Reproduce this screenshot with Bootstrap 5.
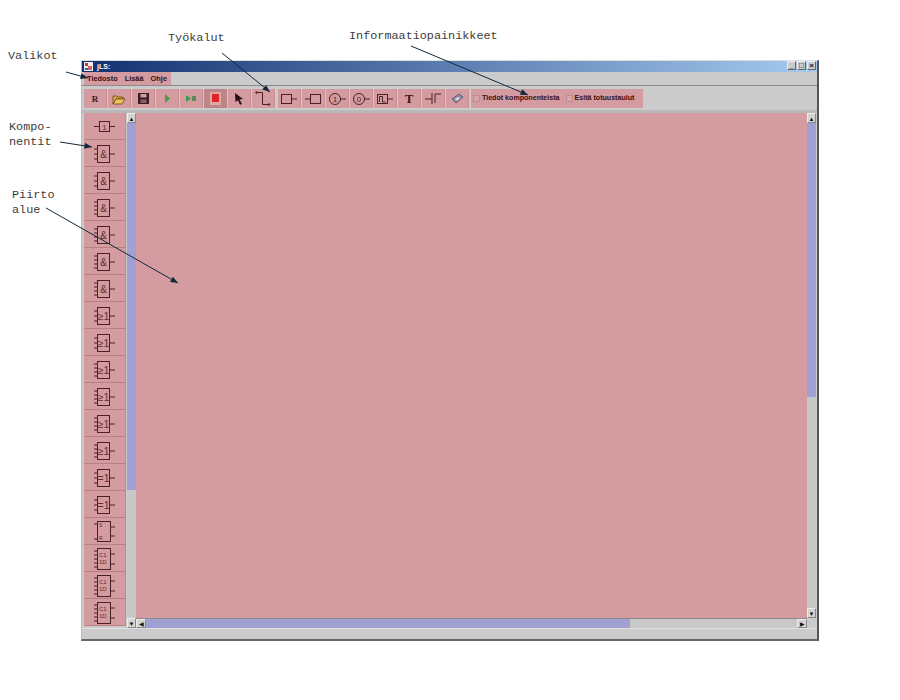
<!DOCTYPE html>
<html lang="fi">
<head>
<meta charset="UTF-8">
<title>JLS</title>
<link href="https://cdn.jsdelivr.net/npm/bootstrap@5.3.0/dist/css/bootstrap.min.css" rel="stylesheet">
<style>
  body { background: #fff; width: 900px; height: 700px; overflow: hidden; position: relative; font-family: "Liberation Sans", Arial, sans-serif; }
  /* window */
  .jls-window { width: 738px; height: 581px; margin: 60px 0 0 81px; background: #cbcbcb; border-right: 2px solid #555; border-bottom: 2px solid #666; border-left: 1px solid #bbb; border-top: 1px solid #ddd; }
  .jls-title { height: 11px; background: linear-gradient(90deg, #12306f, #a6caf0); color: #fff; font-size: 7px; font-weight: 700; line-height: 11px; padding-left: 2px; }
  .jls-winbtn { width: 9px; height: 9px; background: #ccc; border: 1px solid #666; border-top-color: #eee; border-left-color: #eee; margin-left: 1px; font-size: 8px; line-height: 7px; color: #111; text-align: center; }
  .jls-menubar { height: 14px; border-bottom: 1px solid #8a8a8a; padding-left: 2px; }
  .jls-menu { background: #d49ca0; color: #3a0f14; font-size: 7.4px; font-weight: 700; line-height: 14px; padding: 0 4px 0 3px; gap: 7px; }
  .jls-toolbar { height: 27px; padding: 3px 2px 0; border-bottom: 3px solid #b9b9b9; gap: 1px; }
  .jls-tool.btn { width: 23px; height: 19px; background: #d49ca0; color: #40151a; border: 0; border-right: 1px solid #c98f93; display: flex; align-items: center; justify-content: center; padding: 0; border-radius: 0; }
  .jls-tool.btn.active { background: #bd8588; border-color: #bd8588; }
  .jls-tool-gap { margin-left: 2px; }
  .jls-info { height: 19px; margin-left: 1px; background: #d49ca0; color: #3a0f14; font-size: 7.1px; font-weight: 700; width: 172px; padding-left: 2px; gap: 6px; white-space: nowrap; }
  .jls-check { width: 7px; height: 7px; background: #d8a5a8; border: 1px solid #bd8c90; margin-right: 2px; flex: none; }
  .jls-main { height: 517px; padding-left: 2px; }
  .jls-side { width: 42px; }
  .jls-part.btn { width: 42px; height: 27px; background: #d49ca0; border: 0; border-bottom: 1px solid #b98084; border-right: 1px solid #c18a8e; padding: 0; display: block; border-radius: 0; }
  .jls-part svg { display: block; }
  .jls-part text { font-family: "Liberation Sans", Arial, sans-serif; fill: #5a3035; }
  .jls-vbar { width: 9px; background: #c8c8c8; }
  .jls-arrow { height: 10px; background: #d4d4d4; color: #111; font-size: 6px; line-height: 10px; text-align: center; flex: none; border: 1px solid #eee; border-right-color: #888; border-bottom-color: #888; }
  .jls-thumb { background: #a0a0d2; }
  .jls-canvas { background: #d49ca0; }
  .jls-hbar { height: 10px; background: #c8c8c8; border-top: 1px solid #8b8b8b; }
  .jls-hbar .jls-arrow { width: 10px; height: 9px; line-height: 8px; }
  .jls-status { height: 11px; border-top: 1px solid #e2e2e2; }
  /* annotations */
  .jls-note { position: absolute; font-family: "Liberation Mono", "Courier New", monospace; font-size: 11.8px; line-height: 15px; color: #3c3c3c; }
  .jls-arrows { position: absolute; left: 0; top: 0; pointer-events: none; }
</style>
</head>
<body>
<svg width="0" height="0" class="position-absolute">
  <defs>
    <g id="g-and" fill="none" stroke="#4a2226" stroke-width="1">
      <rect x="13.500" y="5.500" width="12" height="17"/>
      <path d="M25 14h6M13 9h-3M13 14h-3M13 19h-3"/>
    </g>
    <g id="g-and2" fill="none" stroke="#4a2226" stroke-width="1">
      <rect x="13.500" y="5.500" width="12" height="17"/>
      <path d="M25 14h6M13 8h-3M13 12h-3M13 16h-3M13 20h-3"/>
    </g>
    <g id="g-latch" fill="none" stroke="#4a2226" stroke-width="1">
      <rect x="13.500" y="3.500" width="13" height="21"/>
      <path d="M26 9h5M26 19h5M14 6h-4M14 10h-4M14 14h-4M14 18h-4M14 22h-4"/>
    </g>
  </defs>
</svg>

<div class="jls-window d-flex flex-column">
  <div class="jls-title d-flex justify-content-between">
    <span class="d-flex align-items-center gap-1">
      <svg width="9" height="9" viewBox="0 0 9 9"><rect width="9" height="9" fill="#eee"/><path d="M1 1h3v3H1z" fill="#c33"/><path d="M4 4h4v4H4z" fill="#c66"/><path d="M1 6h3v2H1z" fill="#36a"/></svg>
      jLS:
    </span>
    <span class="d-flex" style="padding-right:1px">
      <span class="jls-winbtn">_</span><span class="jls-winbtn">□</span><span class="jls-winbtn">×</span>
    </span>
  </div>

  <div class="jls-menubar d-flex">
    <div class="jls-menu d-flex"><span>Tiedosto</span><span>Lisää</span><span>Ohje</span></div>
  </div>

  <div class="jls-toolbar d-flex">
    <button class="jls-tool btn"><span style="font:700 9px 'Liberation Serif',serif">R</span></button>
    <button class="jls-tool btn"><svg width="14" height="12" viewBox="0 0 14 12"><path d="M1 3h4l1 1h5v2H4L1 11z" fill="#e2a63a" stroke="#5a3a10" stroke-width=".7"/><path d="M4 6h9l-3 5H1z" fill="#efc35c" stroke="#5a3a10" stroke-width=".7"/></svg></button>
    <button class="jls-tool btn"><svg width="11" height="11" viewBox="0 0 11 11"><rect width="11" height="11" fill="#3f1c22"/><rect x="2.500" y="1" width="6" height="3.500" fill="#c9a0a0"/><rect x="2.500" y="6.500" width="6" height="3.500" fill="#8c5f62"/></svg></button>
    <button class="jls-tool btn"><svg width="7" height="9" viewBox="0 0 7 9"><path d="M1 0l5 4.500L1 9z" fill="#4c9a4a"/></svg></button>
    <button class="jls-tool btn"><svg width="11" height="7" viewBox="0 0 11 7"><path d="M0 0l5 3.500L0 7z" fill="#3f9a55"/><rect x="6" y="1" width="4" height="5" fill="#5d8a5b"/></svg></button>
    <button class="jls-tool btn active"><svg width="11" height="13" viewBox="0 0 11 13"><rect width="11" height="13" fill="#e0a8a0"/><rect x="2" y="2" width="7" height="8" fill="#e0242c"/></svg></button>
    <button class="jls-tool btn"><svg width="10" height="13" viewBox="0 0 10 13"><path d="M1 1l8 6-3.500.5L8 12l-2 .8-2-4.600L1.500 10z" fill="#2a0c14"/></svg></button>
    <button class="jls-tool btn"><svg width="16" height="17" viewBox="0 0 16 17" fill="none" stroke="#4a2226"><path d="M1 2.500h6.500v12H14"/><circle cx="1.500" cy="2.500" r=".8" fill="#4a2226"/><circle cx="14" cy="14.500" r=".8" fill="#4a2226"/></svg></button>
    <button class="jls-tool btn jls-tool-gap"><svg width="16" height="12" viewBox="0 0 16 12" fill="none" stroke="#4a2226"><rect x=".5" y="1.500" width="10" height="9"/><path d="M10.500 6H16"/></svg></button>
    <button class="jls-tool btn"><svg width="16" height="12" viewBox="0 0 16 12" fill="none" stroke="#4a2226"><rect x="5.500" y="1.500" width="10" height="9"/><path d="M0 6h5.500"/></svg></button>
    <button class="jls-tool btn"><svg width="17" height="12" viewBox="0 0 17 12" fill="none" stroke="#4a2226"><circle cx="6" cy="6" r="5.500"/><path d="M11.500 6H17"/><text x="6" y="9" font-size="8" text-anchor="middle" fill="#4a2226" stroke="none" font-family="Liberation Sans">1</text></svg></button>
    <button class="jls-tool btn"><svg width="17" height="12" viewBox="0 0 17 12" fill="none" stroke="#4a2226"><circle cx="6" cy="6" r="5.500"/><path d="M11.500 6H17"/><text x="6" y="9" font-size="8" text-anchor="middle" fill="#4a2226" stroke="none" font-family="Liberation Sans">0</text></svg></button>
    <button class="jls-tool btn"><svg width="17" height="12" viewBox="0 0 17 12" fill="none" stroke="#4a2226"><rect x=".5" y="1.500" width="10" height="9"/><path d="M10.500 6H16M2.500 9V3.500h3V9h3"/></svg></button>
    <button class="jls-tool btn"><span style="font:700 13px 'Liberation Serif',serif">T</span></button>
    <button class="jls-tool btn"><svg width="17" height="13" viewBox="0 0 17 13" fill="none" stroke="#4a2226"><path d="M0 7h7M7 1v11M10 2v9M10 2h6"/></svg></button>
    <button class="jls-tool btn"><svg width="13" height="11" viewBox="0 0 13 11"><path d="M1 6l7-5 4 3-7 6z" fill="#8d8fb0" stroke="#4b3a50" stroke-width=".7"/><path d="M4 6l3-2 2 1.500-3 2z" fill="#e8d8d8"/></svg></button>
    <div class="jls-info d-flex align-items-center">
      <span class="d-flex align-items-center"><span class="jls-check"></span>Tiedot komponenteista</span>
      <span class="d-flex align-items-center"><span class="jls-check"></span>Esitä totuustaulut</span>
    </div>
  </div>

  <div class="jls-main d-flex">
    <div class="jls-side d-flex flex-column">
      <button class="jls-part btn"><svg width="41" height="26"><g fill="none" stroke="#4a2226"><rect x="15.500" y="8.500" width="10" height="10"/><path d="M10 13.500h5M26 13.500h5"/></g><text x="20.500" y="16.500" font-size="8" text-anchor="middle">1</text></svg></button>
      <button class="jls-part btn"><svg width="41" height="26"><use href="#g-and"/><text x="19.500" y="17.500" font-size="10" text-anchor="middle">&amp;</text></svg></button>
      <button class="jls-part btn"><svg width="41" height="26"><use href="#g-and"/><text x="19.500" y="17.500" font-size="10" text-anchor="middle">&amp;</text></svg></button>
      <button class="jls-part btn"><svg width="41" height="26"><use href="#g-and2"/><text x="19.500" y="17.500" font-size="10" text-anchor="middle">&amp;</text></svg></button>
      <button class="jls-part btn"><svg width="41" height="26"><use href="#g-and2"/><text x="19.500" y="17.500" font-size="10" text-anchor="middle">&amp;</text></svg></button>
      <button class="jls-part btn"><svg width="41" height="26"><use href="#g-and2"/><text x="19.500" y="17.500" font-size="10" text-anchor="middle">&amp;</text></svg></button>
      <button class="jls-part btn"><svg width="41" height="26"><use href="#g-and2"/><text x="19.500" y="17.500" font-size="10" text-anchor="middle">&amp;</text></svg></button>
      <button class="jls-part btn"><svg width="41" height="26"><use href="#g-and"/><text x="19.500" y="18" font-size="10.500" text-anchor="middle">≥1</text></svg></button>
      <button class="jls-part btn"><svg width="41" height="26"><use href="#g-and"/><text x="19.500" y="18" font-size="10.500" text-anchor="middle">≥1</text></svg></button>
      <button class="jls-part btn"><svg width="41" height="26"><use href="#g-and2"/><text x="19.500" y="18" font-size="10.500" text-anchor="middle">≥1</text></svg></button>
      <button class="jls-part btn"><svg width="41" height="26"><use href="#g-and2"/><text x="19.500" y="18" font-size="10.500" text-anchor="middle">≥1</text></svg></button>
      <button class="jls-part btn"><svg width="41" height="26"><use href="#g-and2"/><text x="19.500" y="18" font-size="10.500" text-anchor="middle">≥1</text></svg></button>
      <button class="jls-part btn"><svg width="41" height="26"><use href="#g-and2"/><text x="19.500" y="18" font-size="10.500" text-anchor="middle">≥1</text></svg></button>
      <button class="jls-part btn"><svg width="41" height="26"><use href="#g-and"/><text x="19.500" y="18" font-size="10.500" text-anchor="middle">=1</text></svg></button>
      <button class="jls-part btn"><svg width="41" height="26"><use href="#g-and"/><text x="19.500" y="18" font-size="10.500" text-anchor="middle">=1</text></svg></button>
      <button class="jls-part btn"><svg width="41" height="26"><g fill="none" stroke="#4a2226"><rect x="13.500" y="3.500" width="13" height="20"/><path d="M14 6h-4M14 21h-4M26 9h5M26 18h5"/></g><text x="15" y="9" font-size="5">S</text><text x="15" y="22" font-size="5">R</text></svg></button>
      <button class="jls-part btn"><svg width="41" height="26"><use href="#g-latch"/><text x="15" y="12" font-size="6">C1</text><text x="15" y="19" font-size="6">1D</text></svg></button>
      <button class="jls-part btn"><svg width="41" height="26"><use href="#g-latch"/><text x="15" y="12" font-size="6">C1</text><text x="15" y="19" font-size="6">1D</text></svg></button>
      <button class="jls-part btn"><svg width="41" height="26"><use href="#g-latch"/><text x="15" y="12" font-size="6">C1</text><text x="15" y="19" font-size="6">1D</text></svg></button>
    </div>
    <div class="jls-vbar d-flex flex-column" style="margin-left:1px">
      <div class="jls-arrow">▲</div>
      <div class="jls-thumb" style="height:367px"></div>
      <div class="flex-grow-1"></div>
      <div class="jls-arrow">▼</div>
    </div>
    <div class="d-flex flex-column flex-grow-1">
      <div class="jls-canvas flex-grow-1"></div>
      <div class="jls-hbar d-flex">
        <div class="jls-arrow">◀</div>
        <div class="jls-thumb" style="width:484px"></div>
        <div class="flex-grow-1"></div>
        <div class="jls-arrow">▶</div>
      </div>
    </div>
    <div class="d-flex flex-column" style="width:9px;margin-right:1px">
      <div class="jls-vbar d-flex flex-column flex-grow-1 w-100">
        <div class="jls-arrow">▲</div>
        <div class="jls-thumb" style="height:274px"></div>
        <div class="flex-grow-1"></div>
        <div class="jls-arrow">▼</div>
      </div>
      <div style="height:10px"></div>
    </div>
  </div>
  <div class="jls-status flex-grow-1"></div>
</div>

<div class="jls-note" style="left:8px;top:49px">Valikot</div>
<div class="jls-note" style="left:168px;top:31px">Työkalut</div>
<div class="jls-note" style="left:349px;top:29px">Informaatiopainikkeet</div>
<div class="jls-note" style="left:9px;top:120px">Kompo-<br>nentit</div>
<div class="jls-note" style="left:12px;top:188px">Piirto<br>alue</div>

<svg class="jls-arrows" width="900" height="700" fill="none" stroke="#12283c" stroke-width="1">
  <defs>
    <marker id="tip" viewBox="0 0 10 8" refX="10" refY="4" markerWidth="9" markerHeight="6" orient="auto" markerUnits="userSpaceOnUse">
      <path d="M0 0l10 4-10 4z" fill="#12283c" stroke="none"/>
    </marker>
  </defs>
  <path d="M66 72L88 78" marker-end="url(#tip)"/>
  <path d="M222 53L270 92" marker-end="url(#tip)"/>
  <path d="M411 46L528 95" marker-end="url(#tip)"/>
  <path d="M60 142L92 147" marker-end="url(#tip)"/>
  <path d="M46 208L178 283" marker-end="url(#tip)"/>
</svg>

<script src="https://cdn.jsdelivr.net/npm/bootstrap@5.3.0/dist/js/bootstrap.bundle.min.js"></script>
</body>
</html>
